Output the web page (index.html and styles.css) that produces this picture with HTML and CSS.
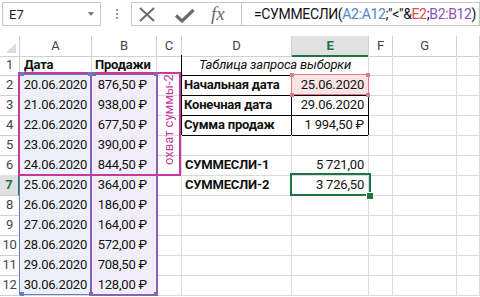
FILE: index.html
```html
<!DOCTYPE html>
<html lang="ru">
<head>
<meta charset="utf-8">
<link rel="stylesheet" href="styles.css">
</head>
<body>
<div class="fbar">
  <div class="namebox"><span>E7</span><span class="caret"></span></div>
  <div class="dots"><i></i><i></i><i></i></div>
  <div class="btns">
    <svg class="ico-x" width="18" height="15" viewBox="0 0 18 15"><path d="M2 1 L16 14 M16 1 L2 14" stroke="#6a6a6a" stroke-width="2" fill="none"/></svg>
    <svg class="ico-ok" width="21" height="15" viewBox="0 0 21 15"><path d="M2 7.5 L8 13 L19.5 2" stroke="#6a6a6a" stroke-width="3.2" fill="none"/></svg>
    <span class="fx">fx</span>
  </div>
  <div class="formula">=СУММЕСЛИ(<span class="ra">A2:A12</span>;"&lt;"&amp;<span class="re">E2</span>;<span class="rb">B2:B12</span>)</div>
</div>

<div class="sheet">
  <div class="r hdr">
    <div class="c corner"><span class="tri"></span></div>
    <div class="c h">A</div><div class="c h">B</div><div class="c h">C</div><div class="c h">D</div>
    <div class="c h hsel">E</div><div class="c h">F</div><div class="c h">G</div><div class="c h"></div>
  </div>
  <div class="r">
    <div class="c rh">1</div><div class="c bold pa">Дата</div><div class="c bold">Продажи</div><div class="c tbl-l"></div>
    <div class="c title span2">Таблица запроса выборки</div><div class="c"></div><div class="c"></div><div class="c"></div>
  </div>
  <div class="r">
    <div class="c rh">2</div><div class="c fa num">20.06.2020</div><div class="c fb cur">876,50 ₽</div><div class="c tbl-l"></div>
    <div class="c bold tb">Начальная дата</div><div class="c num tb pink">25.06.2020</div><div class="c"></div><div class="c"></div><div class="c"></div>
  </div>
  <div class="r">
    <div class="c rh">3</div><div class="c fa num">21.06.2020</div><div class="c fb cur">938,00 ₽</div><div class="c tbl-l"></div>
    <div class="c bold tb">Конечная дата</div><div class="c num tb">29.06.2020</div><div class="c"></div><div class="c"></div><div class="c"></div>
  </div>
  <div class="r">
    <div class="c rh">4</div><div class="c fa num">22.06.2020</div><div class="c fb cur">677,50 ₽</div><div class="c tbl-l"></div>
    <div class="c bold tb">Сумма продаж</div><div class="c num tb">1 994,50 ₽</div><div class="c"></div><div class="c"></div><div class="c"></div>
  </div>
  <div class="r">
    <div class="c rh">5</div><div class="c fa num">23.06.2020</div><div class="c fb cur">390,00 ₽</div><div class="c"></div>
    <div class="c"></div><div class="c"></div><div class="c"></div><div class="c"></div><div class="c"></div>
  </div>
  <div class="r">
    <div class="c rh">6</div><div class="c fa num">24.06.2020</div><div class="c fb cur">844,50 ₽</div><div class="c"></div>
    <div class="c bold">СУММЕСЛИ-1</div><div class="c num">5 721,00</div><div class="c"></div><div class="c"></div><div class="c"></div>
  </div>
  <div class="r">
    <div class="c rh rsel">7</div><div class="c fa num">25.06.2020</div><div class="c fb cur">364,00 ₽</div><div class="c"></div>
    <div class="c bold">СУММЕСЛИ-2</div><div class="c num">3 726,50</div><div class="c"></div><div class="c"></div><div class="c"></div>
  </div>
  <div class="r">
    <div class="c rh">8</div><div class="c fa num">26.06.2020</div><div class="c fb cur">186,00 ₽</div><div class="c"></div>
    <div class="c"></div><div class="c"></div><div class="c"></div><div class="c"></div><div class="c"></div>
  </div>
  <div class="r">
    <div class="c rh">9</div><div class="c fa num">27.06.2020</div><div class="c fb cur">164,00 ₽</div><div class="c"></div>
    <div class="c"></div><div class="c"></div><div class="c"></div><div class="c"></div><div class="c"></div>
  </div>
  <div class="r">
    <div class="c rh">10</div><div class="c fa num">28.06.2020</div><div class="c fb cur">572,00 ₽</div><div class="c"></div>
    <div class="c"></div><div class="c"></div><div class="c"></div><div class="c"></div><div class="c"></div>
  </div>
  <div class="r">
    <div class="c rh">11</div><div class="c fa num">29.06.2020</div><div class="c fb cur">708,50 ₽</div><div class="c"></div>
    <div class="c"></div><div class="c"></div><div class="c"></div><div class="c"></div><div class="c"></div>
  </div>
  <div class="r">
    <div class="c rh">12</div><div class="c fa num">30.06.2020</div><div class="c fb cur">128,00 ₽</div><div class="c"></div>
    <div class="c"></div><div class="c"></div><div class="c"></div><div class="c"></div><div class="c"></div>
  </div>

  <div class="rng rng-a"></div>
  <div class="rng rng-b"></div>
  <div class="rng rng-e"></div>
  <div class="note-box"></div>
  <div class="note">охват суммы-2</div>
  <div class="hd ha" style="left:20px;top:36px"></div>
  <div class="hd ha" style="left:88px;top:36px"></div>
  <div class="hd ha" style="left:20px;top:256px"></div>
  <div class="hd hb" style="left:92px;top:36px"></div>
  <div class="hd hb" style="left:154px;top:36px"></div>
  <div class="hd hb" style="left:89px;top:256px"></div>
  <div class="hd hb" style="left:154px;top:256px"></div>
  <div class="hd he" style="left:290px;top:37px"></div>
  <div class="hd he" style="left:366px;top:37px"></div>
  <div class="hd he" style="left:290px;top:57px"></div>
  <div class="hd he" style="left:366px;top:57px"></div>
  <div class="selbox"></div>
  <div class="fillh"></div>
</div>
</body>
</html>
```

FILE: styles.css
```css
html, body {
  margin: 0;
  padding: 0;
}
body {
  width: 480px;
  height: 297px;
  overflow: hidden;
  background: #ffffff;
  font-family: Roboto, "Liberation Sans", sans-serif;
  font-size: 13px;
  color: #111;
}

/* formula bar */
.fbar {
  height: 36px;
  display: flex;
  align-items: flex-start;
  padding-top: 2px;
  box-sizing: border-box;
}
.namebox {
  margin-left: 2px;
  width: 99px;
  height: 24px;
  border: 1px solid #c6c6c6;
  box-sizing: border-box;
  display: flex;
  align-items: center;
  justify-content: space-between;
  padding: 0 6px 0 6px;
  color: #222;
  font-size: 13px;
}
.caret {
  width: 0;
  height: 0;
  border-left: 3px solid transparent;
  border-right: 3px solid transparent;
  border-top: 4px solid #777;
}
.dots {
  margin-left: 15px;
  width: 2px;
  height: 24px;
  display: flex;
  flex-direction: column;
  justify-content: center;
  gap: 2px;
}
.dots i {
  display: block;
  width: 2px;
  height: 2px;
  background: #9a9a9a;
}
.btns {
  margin-left: 13px;
  width: 110px;
  height: 24px;
  border: 1px solid #c6c6c6;
  border-right: none;
  box-sizing: border-box;
  display: flex;
  align-items: center;
  padding-left: 6px;
}
.ico-x { margin-top: 1px; }
.ico-ok { margin-left: 18px; margin-top: 2px; }
.fx {
  margin-left: 16px;
  font-family: "Liberation Serif", serif;
  font-style: italic;
  font-size: 19px;
  color: #6a6a6a;
  line-height: 22px;
}
.formula {
  flex: 1;
  min-width: 0;
  height: 24px;
  border: 1px solid #c6c6c6;
  box-sizing: border-box;
  padding-left: 12px;
  line-height: 22px;
  font-size: 14px;
  letter-spacing: -0.35px;
  white-space: nowrap;
  overflow: hidden;
  color: #111;
}
.ra { color: #4a86c8; }
.re { color: #e04a50; }
.rb { color: #8a52b8; }

/* sheet */
.sheet {
  position: relative;
}
.r {
  display: grid;
  grid-template-columns: 20px 72px 65px 25px 110px 77px 24px 64px 1fr;
  height: 20px;
}
.r.hdr {
  height: 19px;
}
.c {
  border-right: 1px solid #dadada;
  border-bottom: 1px solid #dadada;
  box-sizing: border-box;
  line-height: 20px;
  white-space: nowrap;
  padding: 0 3px;
  letter-spacing: -0.2px;
}
.h {
  text-align: center;
  color: #444;
  line-height: 19px;
  border-color: #d0d0d0;
}
.hsel {
  background: #e1e1e1;
  color: #217346;
  font-weight: bold;
  border-bottom: 2px solid #217346;
}
.corner {
  position: relative;
  border-color: #d0d0d0;
}
.tri {
  position: absolute;
  right: 3px;
  bottom: 3px;
  width: 0;
  height: 0;
  border-left: 10px solid transparent;
  border-bottom: 10px solid #dcdcdc;
}
.rh {
  text-align: center;
  color: #444;
  padding: 0;
  border-color: #d0d0d0;
}
.rsel {
  background: #e1e1e1;
  color: #217346;
  font-weight: bold;
  border-right: 2px solid #217346;
}
.bold { font-weight: bold; }
.pa { padding-left: 4px; }
.num { text-align: right; padding-right: 4px; }
.cur { text-align: right; padding-right: 9px; }
.fa { background: #edeff9; }
.fb { background: #f1eef9; }
.pink { background: #fbe4e6; }
.title {
  font-style: italic;
  text-align: center;
  border-bottom-color: #000;
}
.span2 { grid-column: span 2; }
.tbl-l { border-right-color: #000; }
.tb { border-right-color: #000; border-bottom-color: #000; padding-left: 2px; }

/* overlays */
.rng {
  position: absolute;
  box-sizing: border-box;
}
.rng-a {
  left: 19px;
  top: 38px;
  width: 73px;
  height: 221px;
  border: 1px solid #5f7fc6;
}
.rng-b {
  left: 90px;
  top: 37px;
  width: 68px;
  height: 223px;
  border: 2px solid #8a62b4;
}
.rng-e {
  left: 291px;
  top: 38px;
  width: 78px;
  height: 21px;
  border: 1px solid #e37884;
}
.note-box {
  position: absolute;
  left: 18px;
  top: 36px;
  width: 163px;
  height: 104px;
  box-sizing: border-box;
  border: 2px solid #c8389c;
}
.note {
  position: absolute;
  left: 158px;
  top: 36px;
  width: 21px;
  height: 96px;
  writing-mode: vertical-rl;
  transform: rotate(180deg);
  display: flex;
  align-items: center;
  justify-content: center;
  color: #c8389c;
  font-size: 13px;
  white-space: nowrap;
}
.hd {
  position: absolute;
  width: 4px;
  height: 4px;
}
.ha { background: #5f7fc6; }
.hb { background: #8a62b4; }
.he { background: #e37884; }
.selbox {
  position: absolute;
  left: 290px;
  top: 137px;
  width: 81px;
  height: 23px;
  box-sizing: border-box;
  border: 2px solid #217346;
}
.fillh {
  position: absolute;
  left: 366px;
  top: 156px;
  width: 6px;
  height: 6px;
  background: #217346;
  border: 1px solid #fff;
}
```
